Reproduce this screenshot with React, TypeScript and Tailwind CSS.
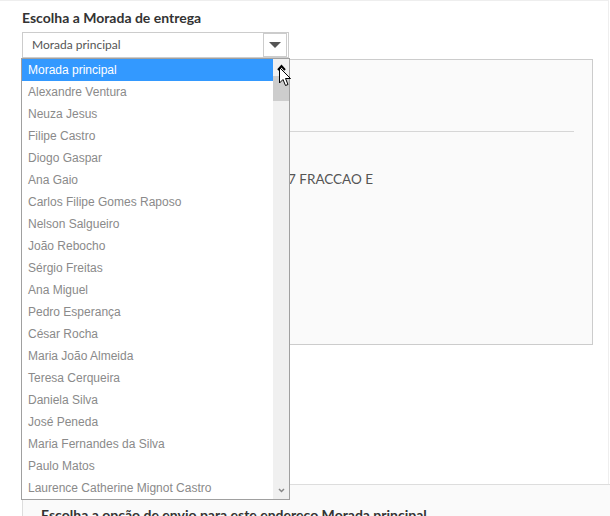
const moradas = [
  "Morada principal",
  "Alexandre Ventura",
  "Neuza Jesus",
  "Filipe Castro",
  "Diogo Gaspar",
  "Ana Gaio",
  "Carlos Filipe Gomes Raposo",
  "Nelson Salgueiro",
  "João Rebocho",
  "Sérgio Freitas",
  "Ana Miguel",
  "Pedro Esperança",
  "César Rocha",
  "Maria João Almeida",
  "Teresa Cerqueira",
  "Daniela Silva",
  "José Peneda",
  "Maria Fernandes da Silva",
  "Paulo Matos",
  "Laurence Catherine Mignot Castro",
];

export default function App() {
  return (
    <div className="relative h-[516px] w-[610px] overflow-hidden bg-white font-['Lato','Liberation_Sans',sans-serif]">
      <div className="h-full w-[609px] border-r border-t border-[#eee] pl-[22px] pt-[8px]">
        {/* Heading */}
        <h3 className="text-[14px] font-bold leading-[18px] text-[#333]">
          Escolha a Morada de entrega
        </h3>

        {/* Select */}
        <div className="relative mt-[5px] w-[267px]">
          <div className="flex h-[26px] items-center border border-[#ccc] bg-white">
            <span className="flex-1 pl-[9px] text-[12px] text-[#555]">
              Morada principal
            </span>
            <div className="mr-[1px] flex h-[24px] w-[24px] items-center justify-center border border-[#ccc] bg-white">
              <span className="h-0 w-0 border-l-[6px] border-r-[6px] border-t-[6px] border-l-transparent border-r-transparent border-t-[#555]" />
            </div>
          </div>

          {/* Open dropdown */}
          <div className="absolute left-[-1px] top-[26px] z-10 flex w-[269px] border border-[#a0a0a0] bg-white font-['Liberation_Sans',sans-serif]">
            <ul className="flex-1">
              {moradas.map((m, i) => (
                <li
                  key={m}
                  className={
                    i === 0
                      ? "h-[22px] bg-[#3399ff] pl-[6px] pt-[1px] text-[12px] leading-[21px] text-white"
                      : "h-[22px] pl-[6px] pt-[1px] text-[12px] leading-[21px] text-[#8a8a8a]"
                  }
                >
                  {m}
                </li>
              ))}
            </ul>
            {/* Scrollbar */}
            <div className="flex w-[16px] flex-col bg-[#f0f0f0]">
              <div className="flex h-[17px] items-center justify-center">
                <svg width="9" height="7" viewBox="0 0 9 7">
                  <path d="M1 6 L4.5 2 L8 6" fill="none" stroke="#000" strokeWidth="2" />
                </svg>
              </div>
              <div className="h-[25px] bg-[#cdcdcd]" />
              <div className="flex-1" />
              <div className="flex h-[17px] items-center justify-center">
                <svg width="7" height="5" viewBox="0 0 7 5">
                  <path d="M1 1 L3.5 3.5 L6 1" fill="none" stroke="#888" strokeWidth="1.5" />
                </svg>
              </div>
            </div>
          </div>

          {/* Mouse cursor */}
          <svg
            className="absolute left-[257px] top-[35px] z-20"
            width="13"
            height="21"
            viewBox="0 0 13 21"
          >
            <path
              d="M0.5 0.5 L0.5 16 L4 12.5 L6.5 18.5 L9 17.5 L6.5 11.5 L11.5 11.5 Z"
              fill="#fff"
              stroke="#000"
              strokeWidth="1"
            />
          </svg>
        </div>

        {/* Address panel */}
        <div className="mt-[1px] h-[286px] w-[571px] border border-[#ccc] bg-[#fafafa] px-[18px] pt-[71px]">
          <div className="border-t border-[#d6d6d6]" />
          <p className="mt-[37px] pl-[247px] text-[13.5px] uppercase text-[#555]">
            7 FRACCAO E
          </p>
        </div>

        {/* Shipping options */}
        <div className="mt-[139px] h-[60px] w-[600px] border border-[#ddd] bg-[#fafafa] pl-[18px] pt-[21px]">
          <p className="text-[14px] font-bold leading-[18px] text-[#333]">
            Escolha a opção de envio para este endereço Morada principal
          </p>
        </div>
      </div>
    </div>
  );
}
